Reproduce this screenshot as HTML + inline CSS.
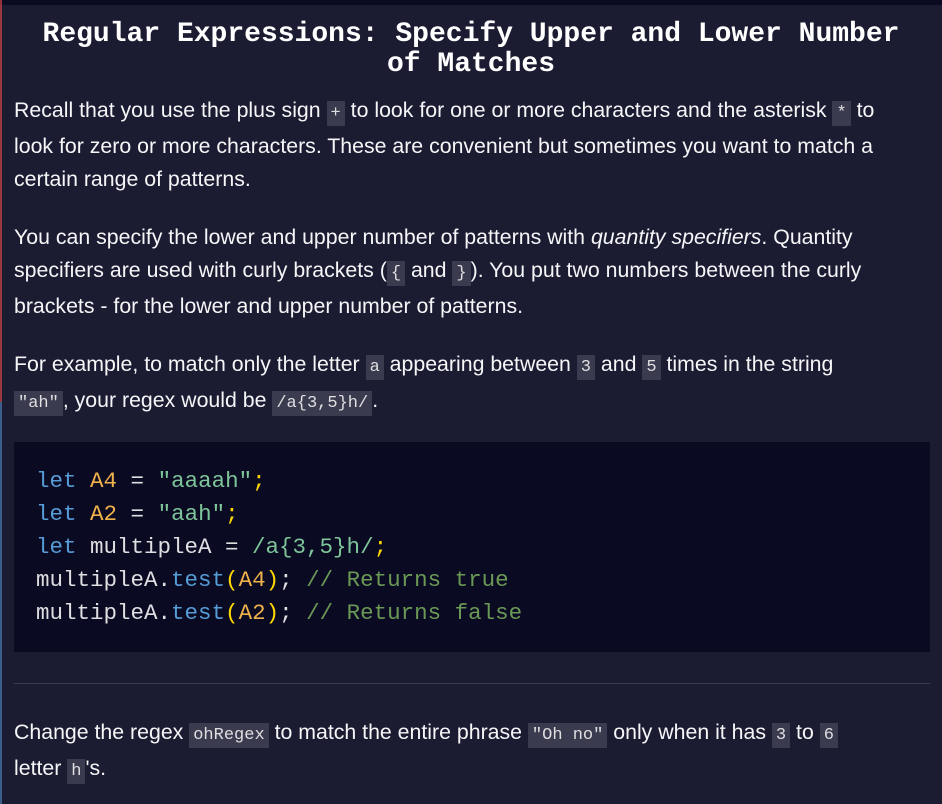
<!DOCTYPE html>
<html><head><meta charset="utf-8"><style>
html,body{margin:0;padding:0;}
body{width:942px;height:804px;background:#1b1b32;color:#f5f6f7;font-family:"Liberation Sans",sans-serif;position:relative;overflow:hidden;}
.top{position:absolute;left:0;top:0;width:942px;height:5px;background:#0a0a23;}
.lb{position:absolute;left:0;top:0;width:2px;height:804px;background:linear-gradient(#c44 0,#c44 50%,#4a7ab0 50%);opacity:.7}
h1{position:absolute;left:0;top:20px;width:942px;margin:0;text-align:center;font-family:"Liberation Mono",monospace;font-weight:bold;font-size:28px;line-height:30px;color:#fff;}
.p{position:absolute;left:14px;font-size:21.3px;line-height:33px;white-space:nowrap;}
code{font-family:"Liberation Mono",monospace;font-size:17px;background:#3b3b4f;padding:3px 4px;color:#dfdfe2}
.code{position:absolute;left:14px;top:442px;width:916px;height:210px;background:#0a0a23;}
.code pre{margin:0;position:absolute;left:22px;top:23px;font-family:"Liberation Mono",monospace;font-size:22.5px;line-height:33px;color:#dfdfe2}
.k{color:#569cd6}.v{color:#f0b24b}.s{color:#7ec699}.y{color:#ffd700}.c{color:#6a9955}.f{color:#569cd6}
hr{position:absolute;left:14px;top:683px;width:916px;margin:0;border:0;border-top:1px solid #3b3b4f}
</style></head><body>
<div class="top"></div><div class="lb"></div>
<h1>Regular Expressions: Specify Upper and Lower Number<br>of Matches</h1>
<div class="p" style="top:94px">Recall that you use the plus sign <code>+</code> to look for one or more characters and the asterisk <code>*</code> to<br>look for zero or more characters. These are convenient but sometimes you want to match a<br>certain range of patterns.</div>
<div class="p" style="top:221px">You can specify the lower and upper number of patterns with <i>quantity specifiers</i>. Quantity<br>specifiers are used with curly brackets (<code>{</code> and <code>}</code>). You put two numbers between the curly<br>brackets - for the lower and upper number of patterns.</div>
<div class="p" style="top:348px">For example, to match only the letter <code>a</code> appearing between <code>3</code> and <code>5</code> times in the string<br><code>"ah"</code>, your regex would be <code>/a{3,5}h/</code>.</div>
<div class="code"><pre><span class="k">let</span> <span class="v">A4</span> = <span class="s">"aaaah"</span><span class="y">;</span>
<span class="k">let</span> <span class="v">A2</span> = <span class="s">"aah"</span><span class="y">;</span>
<span class="k">let</span> multipleA = <span class="s">/a{3,5}h/</span><span class="y">;</span>
multipleA.<span class="f">test</span><span class="y">(</span><span class="v">A4</span><span class="y">)</span>; <span class="c">// Returns true</span>
multipleA.<span class="f">test</span><span class="y">(</span><span class="v">A2</span><span class="y">)</span>; <span class="c">// Returns false</span></pre></div>
<hr>
<div class="p" style="top:716px">Change the regex <code>ohRegex</code> to match the entire phrase <code>"Oh no"</code> only when it has <code>3</code> to <code>6</code><br>letter <code>h</code>'s.</div>
</body></html>
